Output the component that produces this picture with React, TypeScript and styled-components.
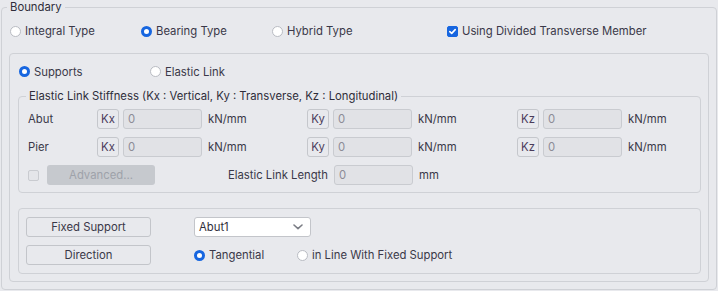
import React from "react";
import styled, { createGlobalStyle } from "styled-components";

const GlobalStyle = createGlobalStyle`
  html, body {
    margin: 0;
    padding: 0;
    background: #e8e9ed;
  }
  body {
    font-family: Inter, "Noto Sans", "Liberation Sans", sans-serif;
    font-size: 11.3px;
    color: #3a3848;
  }
`;

const Page = styled.div`
  width: 718px;
  height: 291px;
  padding: 0 1px 1px 1px;
  box-sizing: border-box;
`;

const Fieldset = styled.fieldset`
  margin: 0;
  border: 1px solid #cfd1d6;
  border-radius: 4px;
  box-sizing: border-box;
  min-width: 0;
`;

const Outer = styled(Fieldset)`
  width: 716px;
  height: 290px;
  padding: 0 7px 7px 7px;
`;

const Legend = styled.legend`
  padding: 0 3px;
  margin-left: -2px;
  line-height: 15px;
  height: 15px;
  color: #2f2d3a;
`;

const TopRow = styled.div`
  display: grid;
  grid-template-columns: 131px 131px 175px auto;
  align-items: center;
  height: 32px;
  padding-left: 1px;
  margin-bottom: 6px;
`;

const Panel = styled.div`
  border: 1px solid #cfd1d6;
  border-radius: 4px;
  box-sizing: border-box;
`;

const MainPanel = styled(Panel)`
  height: 229px;
  padding: 0 7px 7px 8px;
`;

const ModeRow = styled.div`
  display: grid;
  grid-template-columns: 131px auto;
  align-items: center;
  height: 35px;
  padding-left: 1px;
`;

const Stiffness = styled(Fieldset)`
  height: 104px;
  padding: 5px 7px 7px 9px;
  margin-bottom: 15px;
  display: flex;
  flex-direction: column;
  gap: 8px;
`;

const Option = styled.label`
  display: inline-flex;
  align-items: center;
  gap: 4px;
  white-space: nowrap;
`;

const RadioDot = styled.span<{ $on?: boolean }>`
  width: 11px;
  height: 11px;
  border-radius: 50%;
  box-sizing: border-box;
  flex: none;
  background: #ffffff;
  border: ${(p) => (p.$on ? "3px solid #1766e0" : "1px solid #b9bcc3")};
`;

const CheckBox = styled.span<{ $on?: boolean }>`
  width: 11px;
  height: 11px;
  border-radius: 2px;
  box-sizing: border-box;
  flex: none;
  display: inline-flex;
  align-items: center;
  justify-content: center;
  background: ${(p) => (p.$on ? "#1766e0" : "#e4e5e9")};
  border: 1px solid ${(p) => (p.$on ? "#1766e0" : "#c9cbd0")};
`;

const Radio = ({ label, on }: { label: string; on?: boolean }) => (
  <Option>
    <RadioDot $on={on} />
    {label}
  </Option>
);

const Check = ({ on }: { on?: boolean }) => (
  <CheckBox $on={on}>
    {on && (
      <svg width="9" height="9" viewBox="0 0 9 9">
        <polyline
          points="1.8,4.6 3.7,6.4 7.2,2.6"
          fill="none"
          stroke="#ffffff"
          strokeWidth="1.6"
          strokeLinecap="round"
          strokeLinejoin="round"
        />
      </svg>
    )}
  </CheckBox>
);

const KRow = styled.div`
  display: flex;
  align-items: center;
  height: 20px;
`;

const RowLabel = styled.span`
  width: 69px;
  flex: none;
`;

const KGroup = styled.div<{ $last?: boolean }>`
  display: flex;
  align-items: center;
  width: ${(p) => (p.$last ? "auto" : "210px")};
  flex: none;
`;

const KeyBox = styled.span`
  width: 22px;
  height: 20px;
  box-sizing: border-box;
  border: 1px solid #c5c7cc;
  border-radius: 3px;
  display: inline-flex;
  align-items: center;
  justify-content: center;
  color: #4a3b5a;
  margin-right: 4px;
`;

const ValueInput = styled.span`
  width: 79px;
  height: 20px;
  box-sizing: border-box;
  border: 1px solid #c9cbd0;
  border-radius: 3px;
  background: #e1e2e6;
  color: #8c8b96;
  padding-left: 4px;
  display: inline-flex;
  align-items: center;
  margin-right: 6px;
`;

const Unit = styled.span`
  white-space: nowrap;
`;

const AdvancedButton = styled.span`
  width: 108px;
  height: 20px;
  margin-left: 8px;
  border-radius: 3px;
  background: #c6c9ce;
  color: #9ea2aa;
  display: inline-flex;
  align-items: center;
  justify-content: center;
`;

const LengthLabel = styled.span`
  width: 179px;
  box-sizing: border-box;
  padding-right: 6px;
  text-align: right;
  white-space: nowrap;
`;

const SupportPanel = styled(Panel)`
  height: 66px;
  padding: 8px 7px 7px 7px;
  display: flex;
  flex-direction: column;
  gap: 8px;
`;

const SupportRow = styled.div`
  display: flex;
  align-items: center;
  height: 20px;
`;

const SideButton = styled.span`
  width: 125px;
  height: 20px;
  box-sizing: border-box;
  border: 1px solid #c3c5ca;
  border-radius: 3px;
  display: inline-flex;
  align-items: center;
  justify-content: center;
  margin-right: 43px;
`;

const Select = styled.span`
  width: 117px;
  height: 20px;
  box-sizing: border-box;
  border: 1px solid #c3c5ca;
  border-radius: 3px;
  background: #ffffff;
  display: inline-flex;
  align-items: center;
  justify-content: space-between;
  padding: 0 7px 0 4px;
  color: #2f2d3a;
`;

const DirectionOptions = styled.div`
  display: grid;
  grid-template-columns: 103px auto;
  align-items: center;
`;

const Chevron = () => (
  <svg width="10" height="6" viewBox="0 0 10 6">
    <polyline
      points="1,1 5,4.6 9,1"
      fill="none"
      stroke="#7b7d85"
      strokeWidth="1.6"
      strokeLinecap="round"
      strokeLinejoin="round"
    />
  </svg>
);

const StiffRow = ({ label }: { label: string }) => (
  <KRow>
    <RowLabel>{label}</RowLabel>
    {["Kx", "Ky", "Kz"].map((k, i) => (
      <KGroup key={k} $last={i === 2}>
        <KeyBox>{k}</KeyBox>
        <ValueInput>0</ValueInput>
        <Unit>kN/mm</Unit>
      </KGroup>
    ))}
  </KRow>
);

export default function App() {
  return (
    <Page>
      <GlobalStyle />
      <Outer>
        <Legend>Boundary</Legend>
        <TopRow>
          <Radio label="Integral Type" />
          <Radio label="Bearing Type" on />
          <Radio label="Hybrid Type" />
          <Option>
            <Check on />
            Using Divided Transverse Member
          </Option>
        </TopRow>
        <MainPanel>
          <ModeRow>
            <Radio label="Supports" on />
            <Radio label="Elastic Link" />
          </ModeRow>
          <Stiffness>
            <Legend>
              Elastic Link Stiffness (Kx : Vertical, Ky : Transverse, Kz :
              Longitudinal)
            </Legend>
            <StiffRow label="Abut" />
            <StiffRow label="Pier" />
            <KRow>
              <Check />
              <AdvancedButton>Advanced...</AdvancedButton>
              <LengthLabel>Elastic Link Length</LengthLabel>
              <ValueInput>0</ValueInput>
              <Unit>mm</Unit>
            </KRow>
          </Stiffness>
          <SupportPanel>
            <SupportRow>
              <SideButton>Fixed Support</SideButton>
              <Select>
                Abut1
                <Chevron />
              </Select>
            </SupportRow>
            <SupportRow>
              <SideButton>Direction</SideButton>
              <DirectionOptions>
                <Radio label="Tangential" on />
                <Radio label="in Line With Fixed Support" />
              </DirectionOptions>
            </SupportRow>
          </SupportPanel>
        </MainPanel>
      </Outer>
    </Page>
  );
}
